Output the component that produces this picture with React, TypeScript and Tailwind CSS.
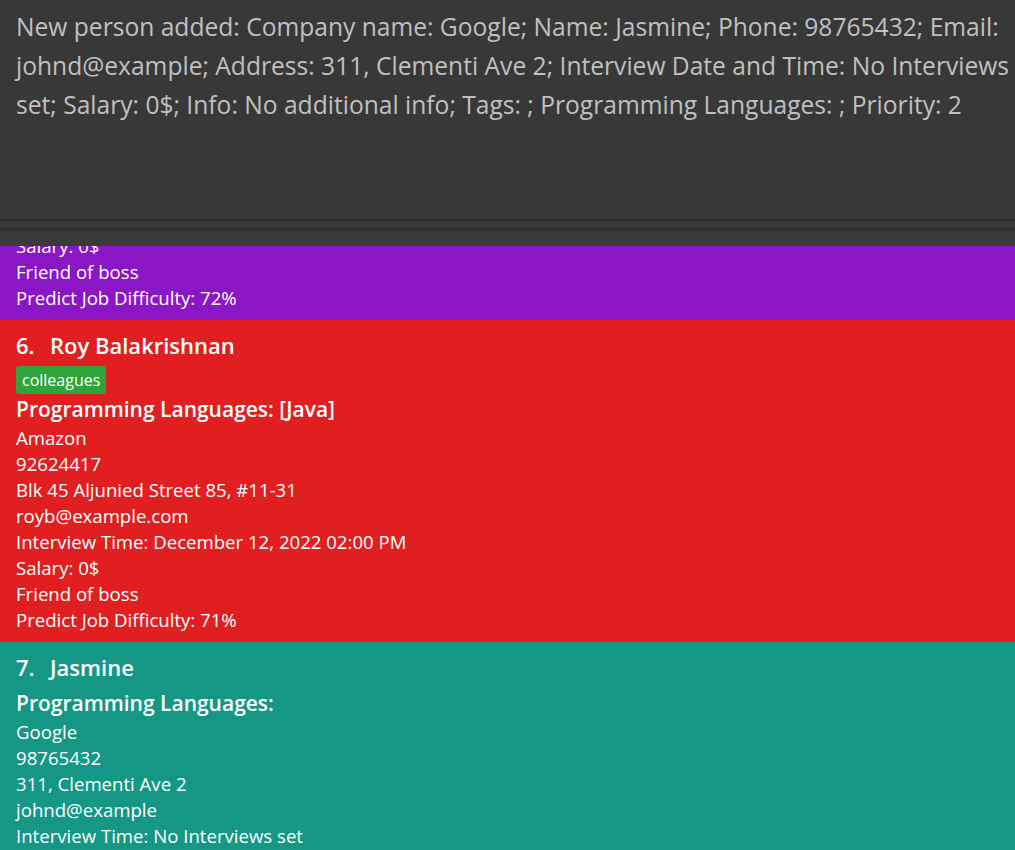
import React from 'react';

type Person = {
  index: number;
  name: string;
  tags: string[];
  languages: string;
  company: string;
  phone: string;
  address: string;
  email: string;
  interview: string;
  salary: string;
  info: string;
  difficulty?: string;
  color: string;
};

const people: Person[] = [
  {
    index: 5,
    name: 'Irfan Ibrahim',
    tags: ['classmates'],
    languages: '[Python]',
    company: 'Meta',
    phone: '92492021',
    address: 'Blk 47 Tampines Street 20, #17-35',
    email: 'irfan@example.com',
    interview: 'December 10, 2022 10:00 AM',
    salary: '0$',
    info: 'Friend of boss',
    difficulty: '72%',
    color: 'bg-[#8b16c6]',
  },
  {
    index: 6,
    name: 'Roy Balakrishnan',
    tags: ['colleagues'],
    languages: '[Java]',
    company: 'Amazon',
    phone: '92624417',
    address: 'Blk 45 Aljunied Street 85, #11-31',
    email: 'royb@example.com',
    interview: 'December 12, 2022 02:00 PM',
    salary: '0$',
    info: 'Friend of boss',
    difficulty: '71%',
    color: 'bg-[#e11f20]',
  },
  {
    index: 7,
    name: 'Jasmine',
    tags: [],
    languages: '',
    company: 'Google',
    phone: '98765432',
    address: '311, Clementi Ave 2',
    email: 'johnd@example',
    interview: 'No Interviews set',
    salary: '0$',
    info: 'No additional info',
    difficulty: '50%',
    color: 'bg-[#159786]',
  },
];

const resultLines = [
  'New person added: Company name: Google; Name: Jasmine; Phone: 98765432; Email:',
  'johnd@example; Address: 311, Clementi Ave 2; Interview Date and Time: No Interviews',
  'set; Salary: 0$; Info: No additional info; Tags: ; Programming Languages: ; Priority: 2',
];

const PersonCard = ({ p }: { p: Person }) => (
  <div className={`${p.color} px-4 pt-[10px] pb-[9px] text-white`}>
    <div className="flex text-[22px] leading-[30px] font-semibold">
      <span className="w-[34px]">{p.index}.</span>
      <span>{p.name}</span>
    </div>
    {p.tags.length > 0 && (
      <div className="mt-[6px] flex gap-1">
        {p.tags.map((t) => (
          <span key={t} className="h-[28px] rounded-[3px] bg-[#2fa43b] px-[6px] text-[16px] leading-[28px]">
            {t}
          </span>
        ))}
      </div>
    )}
    <div className={`${p.tags.length > 0 ? 'mt-[1px]' : 'mt-[7px]'} text-[21px] leading-[28px] font-semibold`}>
      Programming Languages: {p.languages}
    </div>
    <div className="mt-[2px] text-[18.6px] leading-[26px]">
      <div>{p.company}</div>
      <div>{p.phone}</div>
      <div>{p.address}</div>
      <div>{p.email}</div>
      <div>Interview Time: {p.interview}</div>
      <div>Salary: {p.salary}</div>
      <div>{p.info}</div>
      {p.difficulty && <div>Predict Job Difficulty: {p.difficulty}</div>}
    </div>
  </div>
);

export default function App() {
  return (
    <div
      className="flex h-[850px] w-[1015px] flex-col overflow-hidden bg-[#383838]"
      style={{ fontFamily: '"Open Sans", "Noto Sans", sans-serif' }}
    >
      {/* result display */}
      <div className="h-[219px] shrink-0 px-4 pt-[7px] text-[24.6px] leading-[39px] text-[#c0c0c0]">
        {resultLines.map((l) => (
          <div key={l} className="whitespace-nowrap">{l}</div>
        ))}
      </div>

      {/* split pane divider */}
      <div className="h-[2px] shrink-0 bg-[#2d2d2d]" />
      <div className="h-[7px] shrink-0 bg-[#3a3a3a]" />
      <div className="h-[3px] shrink-0 bg-[#2f2f2f]" />
      <div className="h-[15px] shrink-0 bg-[#3a3a3a]" />

      {/* person list */}
      <div className="min-h-0 flex-1 overflow-hidden">
        <div className="-mt-[248px] flex flex-col">
          {people.map((p) => (
            <PersonCard key={p.index} p={p} />
          ))}
        </div>
      </div>
    </div>
  );
}
